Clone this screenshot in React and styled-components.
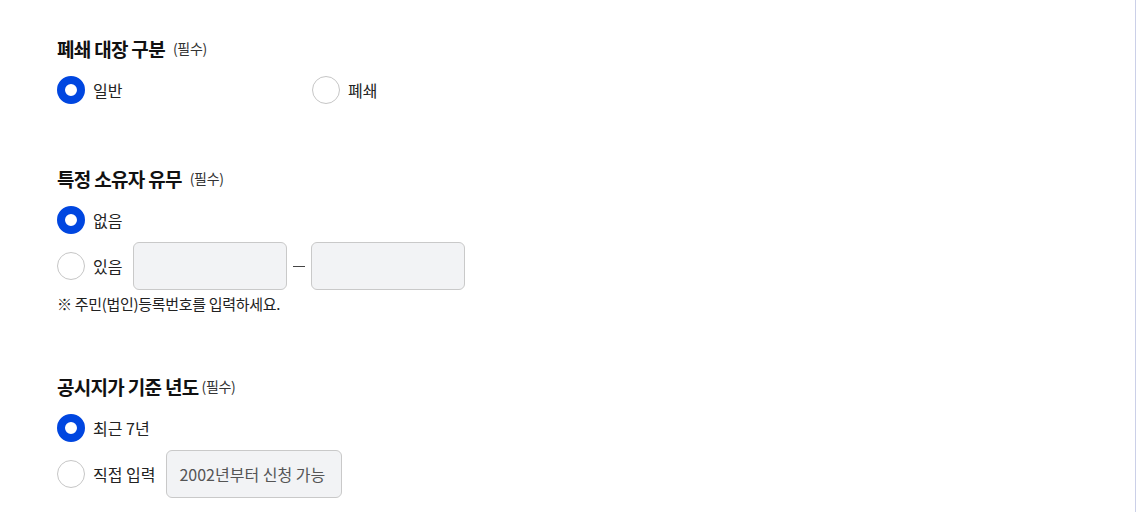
import React, { useState } from "react";
import styled, { createGlobalStyle } from "styled-components";

const GlobalStyle = createGlobalStyle`
  html, body {
    margin: 0;
    padding: 0;
    background: #fff;
  }
  body {
    font-family: "Noto Sans CJK KR", "Noto Sans", sans-serif;
    color: #222;
  }
  * {
    box-sizing: border-box;
  }
`;

const Page = styled.div`
  width: 1136px;
  height: 512px;
  overflow: hidden;
  border-right: 1px solid #cbd0e8;
  padding: 36px 0 0 57px;
  display: flex;
  flex-direction: column;
  gap: 62px;
`;

const Section = styled.section`
  display: flex;
  flex-direction: column;
`;

const Title = styled.h3`
  margin: 0 0 16px;
  height: 24px;
  display: flex;
  align-items: center;
  gap: ${(p) => (p.$tight ? "3px" : "8px")};
  font-size: 19px;
  font-weight: 700;
  letter-spacing: -0.7px;
  color: #111;
`;

const Required = styled.span`
  font-size: 14px;
  font-weight: 400;
  color: #333;
  letter-spacing: -0.3px;
`;

const Options = styled.div`
  display: flex;
  flex-direction: ${(p) => (p.$inline ? "row" : "column")};
  gap: ${(p) => (p.$inline ? "0" : "8px")};
`;

const Option = styled.label`
  display: flex;
  align-items: center;
  width: ${(p) => (p.$width ? `${p.$width}px` : "auto")};
  min-height: 28px;
  cursor: pointer;
`;

const Radio = styled.span`
  flex: none;
  width: 28px;
  height: 28px;
  border-radius: 50%;
  background: #fff;
  border: ${(p) => (p.$checked ? "8px solid #0046e0" : "1px solid #c6c6c6")};
`;

const Label = styled.span`
  margin-left: 8px;
  margin-right: 11px;
  font-size: 16px;
  letter-spacing: 0;
  color: #222;
`;

const Field = styled.input`
  width: ${(p) => p.$width}px;
  height: 48px;
  border: 1px solid #c9c9c9;
  border-radius: 6px;
  background: #f2f3f5;
  padding: 0 12px;
  font-family: inherit;
  font-size: 16px;
  color: #222;
  outline: none;
  &::placeholder {
    color: #555;
  }
`;

const Dash = styled.span`
  width: 24px;
  display: flex;
  justify-content: center;
  &::before {
    content: "";
    width: 12px;
    height: 1px;
    background: #444;
  }
`;

const Note = styled.p`
  margin: 5px 0 0;
  line-height: 17px;
  font-size: 15px;
  letter-spacing: -0.3px;
  color: #222;
`;

function App() {
  const [closed, setClosed] = useState("normal");
  const [owner, setOwner] = useState("none");
  const [year, setYear] = useState("recent");

  return (
    <>
      <GlobalStyle />
      <Page>
        <Section>
          <Title>
            폐쇄 대장 구분 <Required>(필수)</Required>
          </Title>
          <Options $inline>
            <Option $width={255} onClick={() => setClosed("normal")}>
              <Radio $checked={closed === "normal"} />
              <Label>일반</Label>
            </Option>
            <Option onClick={() => setClosed("closed")}>
              <Radio $checked={closed === "closed"} />
              <Label>폐쇄</Label>
            </Option>
          </Options>
        </Section>

        <Section>
          <Title>
            특정 소유자 유무 <Required>(필수)</Required>
          </Title>
          <Options>
            <Option onClick={() => setOwner("none")}>
              <Radio $checked={owner === "none"} />
              <Label>없음</Label>
            </Option>
            <Option onClick={() => setOwner("some")}>
              <Radio $checked={owner === "some"} />
              <Label>있음</Label>
              <Field $width={154} />
              <Dash />
              <Field $width={154} />
            </Option>
          </Options>
          <Note>※ 주민(법인)등록번호를 입력하세요.</Note>
        </Section>

        <Section>
          <Title $tight>
            공시지가 기준 년도 <Required>(필수)</Required>
          </Title>
          <Options>
            <Option onClick={() => setYear("recent")}>
              <Radio $checked={year === "recent"} />
              <Label>최근 7년</Label>
            </Option>
            <Option onClick={() => setYear("custom")}>
              <Radio $checked={year === "custom"} />
              <Label>직접 입력</Label>
              <Field $width={176} placeholder="2002년부터 신청 가능" />
            </Option>
          </Options>
        </Section>
      </Page>
    </>
  );
}

export default App;
